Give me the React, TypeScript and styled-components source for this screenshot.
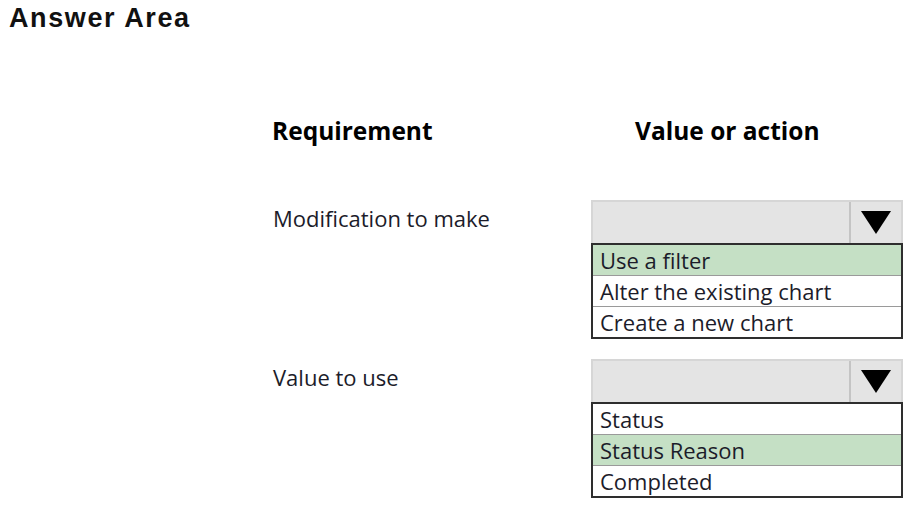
import React from 'react';
import styled, { createGlobalStyle } from 'styled-components';

const QUESTIONS = [
  {
    label: 'Modification to make',
    options: ['Use a filter', 'Alter the existing chart', 'Create a new chart'],
    selected: 0,
  },
  {
    label: 'Value to use',
    options: ['Status', 'Status Reason', 'Completed'],
    selected: 1,
  },
];

export default function App() {
  return (
    <Page>
      <GlobalStyle />
      <Title>Answer Area</Title>
      <Table>
        <HeadCell>Requirement</HeadCell>
        <HeadCell $indent>Value or action</HeadCell>
        {QUESTIONS.map((q) => (
          <React.Fragment key={q.label}>
            <Label>{q.label}</Label>
            <Dropdown>
              <Combo>
                <ComboField />
                <ComboButton>
                  <svg width="30" height="23" viewBox="0 0 30 23">
                    <polygon points="0,0 30,0 15,23" fill="#000" />
                  </svg>
                </ComboButton>
              </Combo>
              <OptionList>
                {q.options.map((opt, idx) => (
                  <Option key={opt} $selected={idx === q.selected}>
                    {opt}
                  </Option>
                ))}
              </OptionList>
            </Dropdown>
          </React.Fragment>
        ))}
      </Table>
    </Page>
  );
}

const GlobalStyle = createGlobalStyle`
  body {
    margin: 0;
    background: #fff;
    font-family: 'Open Sans', 'Noto Sans', sans-serif;
    color: #1a1a1a;
  }
`;

const Page = styled.div`
  width: 914px;
  height: 515px;
  padding: 3px 0 0 9px;
  box-sizing: border-box;
`;

const Title = styled.h1`
  margin: 0;
  font-family: 'Liberation Sans', Arial, sans-serif;
  font-size: 27px;
  font-weight: bold;
  letter-spacing: 1.6px;
  line-height: 30px;
  color: #111;
`;

const Table = styled.div`
  display: grid;
  grid-template-columns: 319px 312px;
  row-gap: 20px;
  margin: 83px 0 0 263px;
`;

const HeadCell = styled.div<{ $indent?: boolean }>`
  font-size: 24.5px;
  font-weight: bold;
  line-height: 30px;
  color: #000;
  padding-left: ${(p) => (p.$indent ? '44px' : '0')};
  margin-bottom: 34px;
`;

const Label = styled.div<{ $offset?: number }>`
  font-size: 22px;
  line-height: 28px;
  padding-top: 4px;
  padding-left: 1px;
  color: #1c1c2a;
`;

const Dropdown = styled.div`
  display: flex;
  flex-direction: column;
`;

const Combo = styled.div`
  display: flex;
  height: 43px;
  box-sizing: border-box;
  border: 2px solid #d6d6d6;
  border-bottom: none;
  background: #e4e4e4;
`;

const ComboField = styled.div`
  flex: 1;
`;

const ComboButton = styled.div`
  width: 50px;
  display: flex;
  align-items: center;
  justify-content: center;
  border-left: 2px solid #c4c4c4;
`;

const OptionList = styled.div`
  border: 2px solid #2e2e2e;
  background: #fff;
`;

const Option = styled.div<{ $selected?: boolean }>`
  height: 30px;
  line-height: 30px;
  padding-left: 7px;
  font-size: 22px;
  color: #1c1c2a;
  background: ${(p) => (p.$selected ? '#c5e0c5' : '#fff')};
  & + & {
    border-top: 1px solid #9a9a9a;
  }
`;
